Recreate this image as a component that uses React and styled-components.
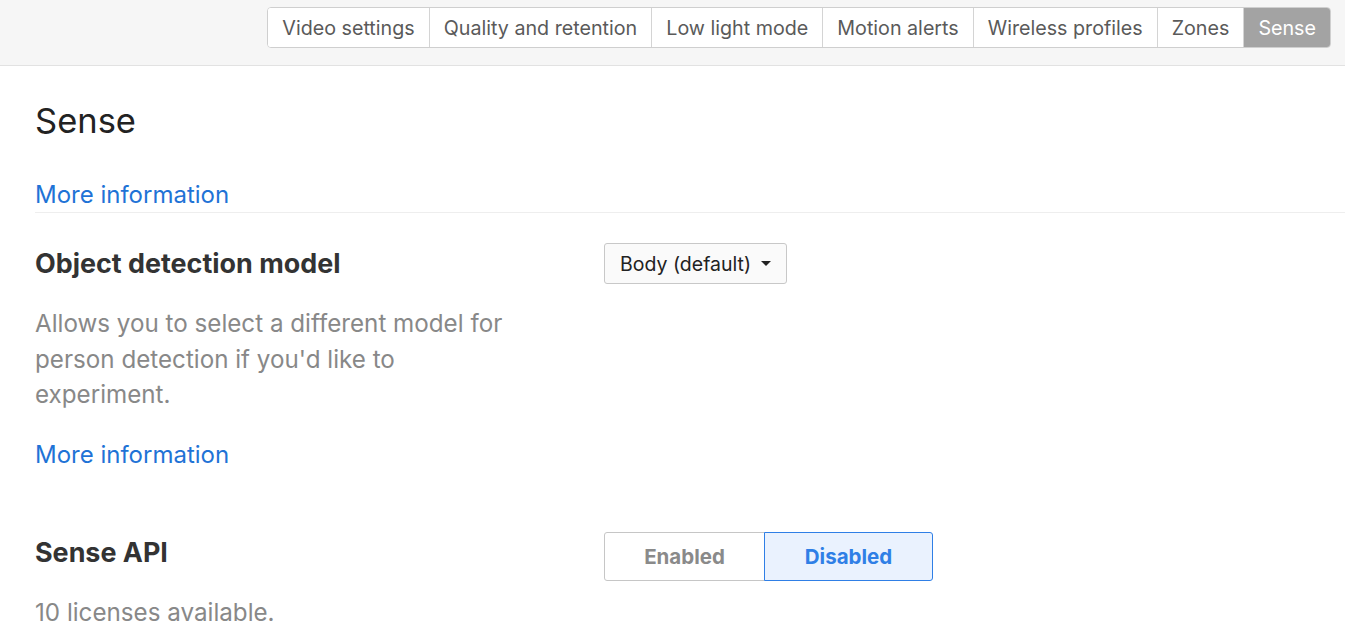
import React, { useState } from 'react';
import styled, { createGlobalStyle } from 'styled-components';

const GlobalStyle = createGlobalStyle`
  html, body {
    margin: 0;
    padding: 0;
    background: #fff;
    font-family: Inter, "Noto Sans", sans-serif;
  }
`;

const Page = styled.div`
  width: 100%;
  min-height: 632px;
  background: #fff;
`;

const TopBar = styled.div`
  height: 66px;
  background: #f6f6f6;
  border-bottom: 1px solid #e2e2e2;
  display: flex;
  justify-content: flex-end;
  align-items: flex-start;
  padding: 7px 14px 0 0;
  box-sizing: border-box;
`;

const Tabs = styled.div`
  display: flex;
  border: 1px solid #cfcfcf;
  border-radius: 4px;
  background: #fff;
  overflow: hidden;
`;

const Tab = styled.button`
  font-family: inherit;
  font-size: 19.7px;
  height: 39px;
  padding: 0 14px;
  border: none;
  border-left: ${p => (p.$first ? 'none' : '1px solid #d4d4d4')};
  background: ${p => (p.$active ? '#a3a3a3' : '#fff')};
  color: ${p => (p.$active ? '#fff' : '#5a5a5a')};
  cursor: pointer;
  white-space: nowrap;
`;

const Content = styled.div`
  padding: 0 0 0 35px;
`;

const Title = styled.h1`
  margin: 35px 0 0;
  font-size: 34.5px;
  line-height: 40px;
  font-weight: 400;
  color: #222;
`;

const Link = styled.a`
  display: block;
  font-size: 24px;
  line-height: 30px;
  color: #1f73d6;
  text-decoration: none;
  margin-top: ${p => p.$top || 0}px;
  cursor: pointer;
`;

const Divider = styled.div`
  height: 1px;
  background: #eeeeee;
  margin: 2px 0 0 35px;
`;

const Row = styled.div`
  display: flex;
  align-items: flex-start;
  padding-top: ${p => p.$top}px;
`;

const Left = styled.div`
  width: 569px;
  flex-shrink: 0;
`;

const Heading = styled.h2`
  margin: 0;
  font-size: 26.9px;
  line-height: 41px;
  font-weight: 700;
  color: #333;
`;

const Desc = styled.p`
  margin: ${p => p.$top || 22}px 0 0;
  max-width: 495px;
  font-size: 24.2px;
  line-height: 35.6px;
  color: #888;
`;

const Select = styled.button`
  display: flex;
  align-items: center;
  gap: 10px;
  height: 41px;
  padding: 0 15px;
  font-family: inherit;
  font-size: 19.5px;
  color: #222;
  background: #fafafa;
  border: 1px solid #c8c8c8;
  border-radius: 3px;
  cursor: pointer;
`;

const Caret = styled.span`
  width: 0;
  height: 0;
  border-left: 5px solid transparent;
  border-right: 5px solid transparent;
  border-top: 5px solid #222;
`;

const Toggle = styled.div`
  display: flex;
  height: 49px;
`;

const ToggleBtn = styled.button`
  font-family: inherit;
  font-size: 20.5px;
  font-weight: 700;
  width: ${p => p.$w}px;
  height: 49px;
  border: 1px solid ${p => (p.$on ? '#2f7fe6' : '#c6c6c6')};
  background: ${p => (p.$on ? '#eaf2fe' : '#fff')};
  color: ${p => (p.$on ? '#2f7fe6' : '#8a8a8a')};
  border-radius: ${p => (p.$first ? '3px 0 0 3px' : '0 3px 3px 0')};
  margin-left: ${p => (p.$first ? 0 : -1)}px;
  position: relative;
  z-index: ${p => (p.$on ? 1 : 0)};
  cursor: pointer;
`;

const tabs = [
  'Video settings',
  'Quality and retention',
  'Low light mode',
  'Motion alerts',
  'Wireless profiles',
  'Zones',
  'Sense',
];

export default function App() {
  const [api, setApi] = useState(false);
  return (
    <Page>
      <GlobalStyle />
      <TopBar>
        <Tabs>
          {tabs.map((t, i) => (
            <Tab key={t} $first={i === 0} $active={t === 'Sense'}>
              {t}
            </Tab>
          ))}
        </Tabs>
      </TopBar>
      <Content>
        <Title>Sense</Title>
        <Link $top={39}>More information</Link>
      </Content>
      <Divider />
      <Content>
        <Row $top={30}>
          <Left>
            <Heading>Object detection model</Heading>
            <Desc>
              Allows you to select a different model for person detection if you'd like to experiment.
            </Desc>
            <Link $top={27}>More information</Link>
          </Left>
          <Select>
            Body (default) <Caret />
          </Select>
        </Row>
        <Row $top={62}>
          <Left>
            <Heading>Sense API</Heading>
            <Desc $top={22}>10 licenses available.</Desc>
          </Left>
          <Toggle>
            <ToggleBtn $first $w={161} $on={api} onClick={() => setApi(true)}>
              Enabled
            </ToggleBtn>
            <ToggleBtn $w={169} $on={!api} onClick={() => setApi(false)}>
              Disabled
            </ToggleBtn>
          </Toggle>
        </Row>
      </Content>
    </Page>
  );
}
